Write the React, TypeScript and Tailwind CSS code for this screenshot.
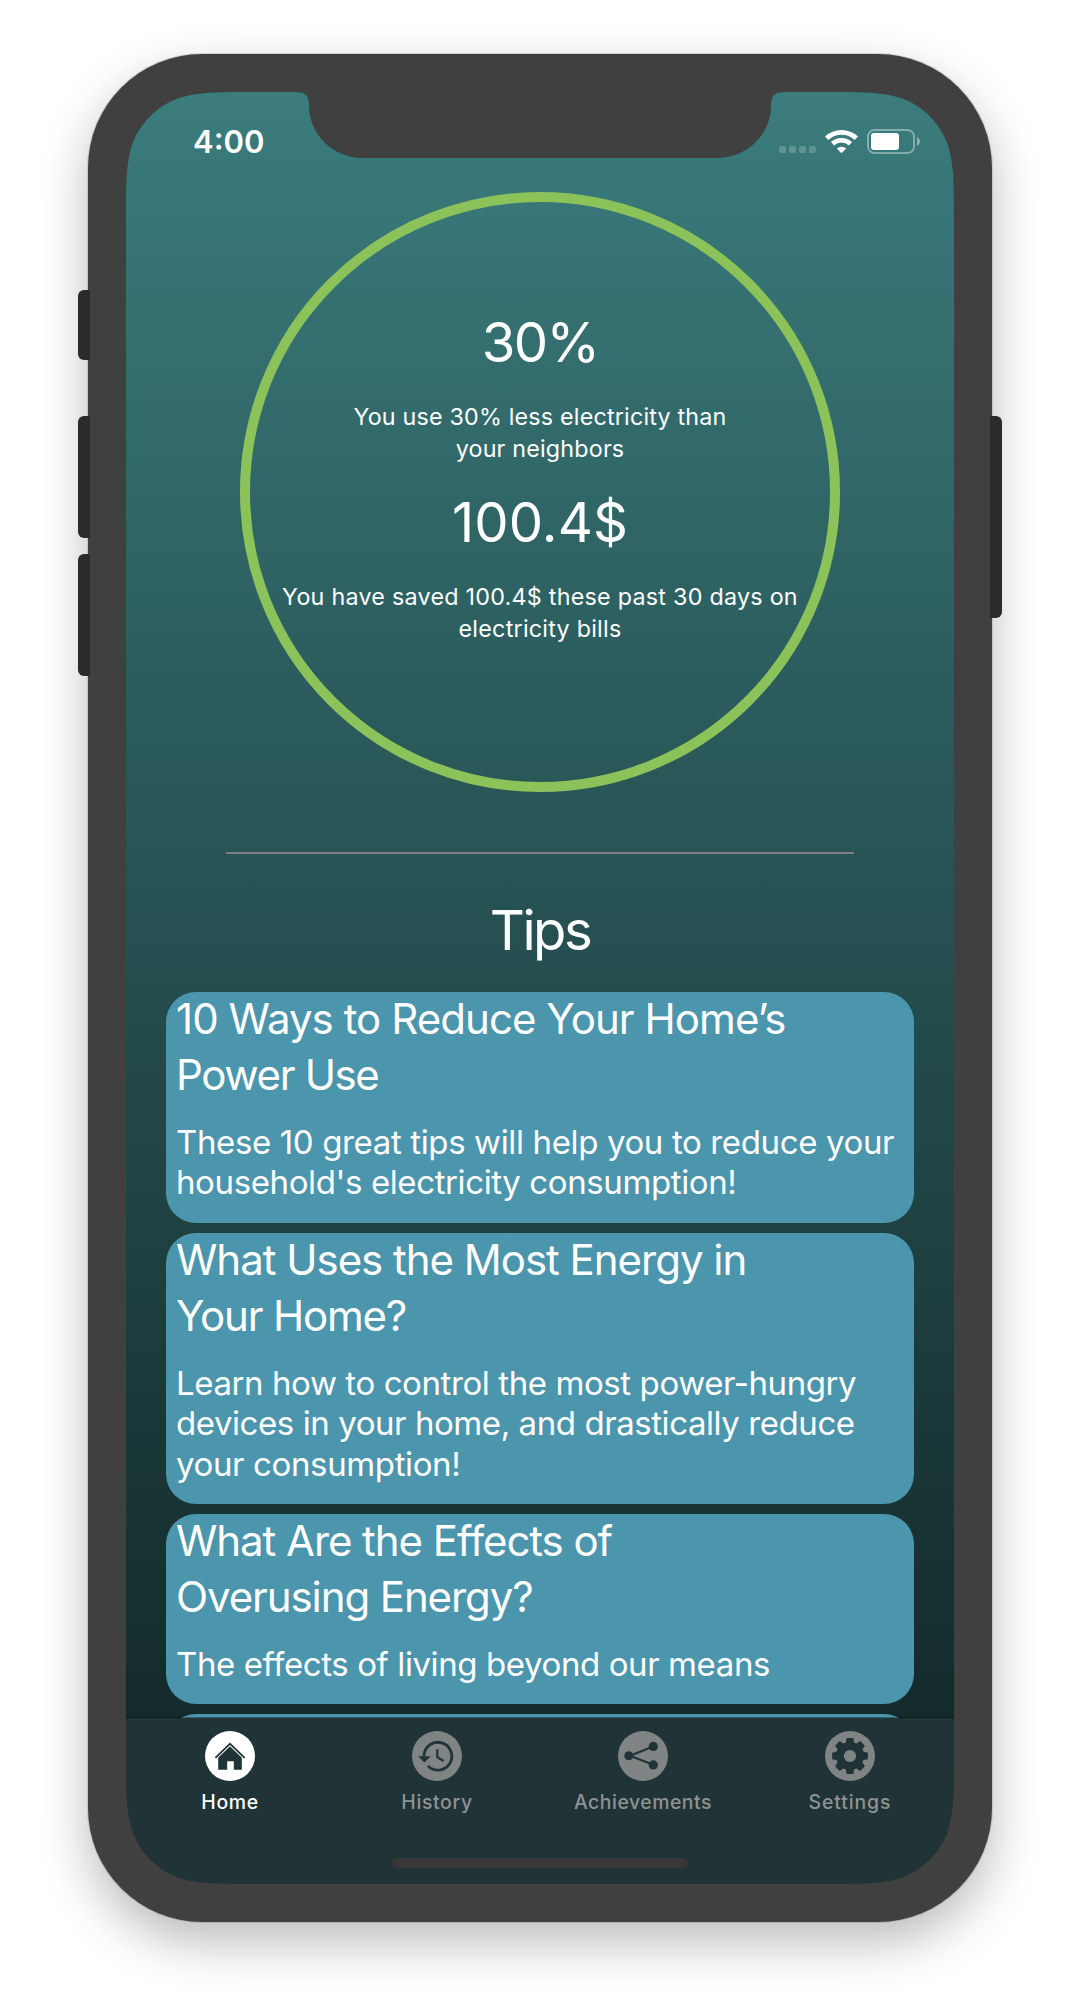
import React from "react";

const SCREEN_CLIP =
  "[clip-path:path('M126.88_0_L171_0_C179_0_183_4_183_13_C183_42_206_66_238_66_L590_66_C622_66_645_42_645_13_C645_4_649_0_657_0_L701.12_0_C737.66_0_755.92_0_775.59_6.22_C797.06_14.03_813.97_30.94_821.78_52.41_C828_72.08_828_90.34_828_126.88_L828_1665.12_C828_1701.66_828_1719.92_821.78_1739.59_C813.97_1761.06_797.06_1777.97_775.59_1785.78_C755.92_1792_737.66_1792_701.12_1792_L126.88_1792_C90.34_1792_72.08_1792_52.41_1785.78_C30.94_1777.97_14.03_1761.06_6.22_1739.59_C0_1719.92_0_1701.66_0_1665.12_L0_126.88_C0_90.34_0_72.08_6.22_52.41_C14.03_30.94_30.94_14.03_52.41_6.22_C72.08_0_90.34_0_126.88_0_Z')]";

type Line = { text: string; tracking: string };

const tips: { title: Line[]; body: Line[] }[] = [
  {
    title: [
      { text: "10 Ways to Reduce Your Home’s", tracking: "tracking-[-0.94px]" },
      { text: "Power Use", tracking: "tracking-[-1.35px]" },
    ],
    body: [
      { text: "These 10 great tips will help you to reduce your", tracking: "tracking-[-0.37px]" },
      { text: "household's electricity consumption!", tracking: "tracking-[-0.39px]" },
    ],
  },
  {
    title: [
      { text: "What Uses the Most Energy in", tracking: "tracking-[-1.02px]" },
      { text: "Your Home?", tracking: "tracking-[-1.2px]" },
    ],
    body: [
      { text: "Learn how to control the most power-hungry", tracking: "tracking-[-0.41px]" },
      { text: "devices in your home, and drastically reduce", tracking: "tracking-[-0.43px]" },
      { text: "your consumption!", tracking: "tracking-[-0.37px]" },
    ],
  },
  {
    title: [
      { text: "What Are the Effects of", tracking: "tracking-[-1.07px]" },
      { text: "Overusing Energy?", tracking: "tracking-[-1.1px]" },
    ],
    body: [{ text: "The effects of living beyond our means", tracking: "tracking-[-0.4px]" }],
  },
];

function Lines({ lines }: { lines: Line[] }) {
  return (
    <>
      {lines.map((l) => (
        <span key={l.text} className={`block whitespace-nowrap ${l.tracking}`}>
          {l.text}
        </span>
      ))}
    </>
  );
}

function TipCard({ title, body }: { title: Line[]; body: Line[] }) {
  return (
    <article className="shrink-0 rounded-[30px] bg-[#4b95ad] px-[10px] pb-[20px]">
      <h3 className="mt-[-1px] text-[42px] leading-[56px]">
        <Lines lines={title} />
      </h3>
      <p className="mt-[18.75px] text-[33px] leading-[40.5px]">
        <Lines lines={body} />
      </p>
    </article>
  );
}

function StatusIcons() {
  return (
    <svg width="142" height="28" viewBox="0 0 142 28" fill="none">
      <g fill="#fff" fillOpacity=".2">
        <rect x="0" y="18" width="7" height="7" rx="2" />
        <rect x="10" y="18" width="7" height="7" rx="2" />
        <rect x="20" y="18" width="7" height="7" rx="2" />
        <rect x="30" y="18" width="7" height="7" rx="2" />
      </g>
      <g stroke="#fff">
        <path d="M47.7 10.2A21.6 21.6 0 0 1 77.3 10.2" strokeWidth="4.8" />
        <path d="M53.5 15.7A13.3 13.3 0 0 1 71.5 15.7" strokeWidth="4.6" />
      </g>
      <path d="M62.5 25.2L57.8 20.6A6.8 6.8 0 0 1 67.2 20.6Z" fill="#fff" />
      <rect x="89" y="2" width="46" height="23" rx="6.5" stroke="#fff" strokeOpacity=".38" strokeWidth="2" />
      <rect x="92" y="5" width="28" height="17" rx="3" fill="#fff" />
      <path d="M138 9.2C142 10.8 142 16.2 138 17.8Z" fill="#fff" fillOpacity=".42" />
    </svg>
  );
}

const GLYPH = "#203336";

function HomeGlyph() {
  return (
    <>
      <path d="M25 15L36.8 26.2V38.8H28.8V30.2H22.2V38.8H13.2V26.2Z" fill={GLYPH} />
      <path d="M10.4 26.9L25 12.8L39.6 26.9" stroke={GLYPH} strokeWidth="2" />
      <path d="M12 27.2L25 14.8L38 27.2" stroke="#fff" strokeWidth="0.9" />
    </>
  );
}

function HistoryGlyph() {
  return (
    <>
      <path d="M12 26V24.8A13.9 13.9 0 1 1 15.9 34.9" stroke={GLYPH} strokeWidth="2.8" />
      <path d="M6 25.2H18.8L12.4 31.6Z" fill={GLYPH} />
      <path d="M25.3 18.2V26.2L31.6 30" stroke={GLYPH} strokeWidth="2.2" />
    </>
  );
}

function ShareGlyph() {
  return (
    <>
      <path d="M35.3 15.6L12 24.8L35.3 33.8" stroke={GLYPH} strokeWidth="2.2" />
      <circle cx="10.8" cy="24.7" r="4.5" fill={GLYPH} />
      <circle cx="35.3" cy="15.4" r="4.6" fill={GLYPH} />
      <circle cx="35.3" cy="33.9" r="4.6" fill={GLYPH} />
    </>
  );
}

function GearGlyph({ hub }: { hub: string }) {
  return (
    <>
      <circle cx="25" cy="25" r="14" fill={GLYPH} />
      {[0, 45, 90, 135, 180, 225, 270, 315].map((a) => (
        <path
          key={a}
          d="M19.8 13.5C20.9 12.6 21.1 11 21.2 9Q21.3 7.1 22.4 7.1H27.6Q28.7 7.1 28.8 9C28.9 11 29.1 12.6 30.2 13.5V16H19.8Z"
          fill={GLYPH}
          transform={`rotate(${a} 25 25)`}
        />
      ))}
      <circle cx="25" cy="25" r="6.1" fill={hub} />
    </>
  );
}

function Tab({
  label,
  tracking,
  active,
  children,
}: {
  label: string;
  tracking: string;
  active?: boolean;
  children: React.ReactNode;
}) {
  return (
    <div className="flex flex-col items-center gap-[9px]">
      <svg width="50" height="50" viewBox="0 0 50 50" fill="none">
        <circle cx="25" cy="25" r="25" fill={active ? "#fff" : "#808485"} />
        {children}
      </svg>
      <span
        className={`text-[19.4px] leading-[24px] font-[460] ${tracking} ${active ? "text-white" : "text-[#8f9293]"}`}
      >
        {label}
      </span>
    </div>
  );
}

function SideButton({ className }: { className: string }) {
  return <div className={`absolute w-[12px] bg-[#2b2b2b] ${className}`} />;
}

export default function App() {
  return (
    <div className="h-[2008px] w-[1080px] overflow-hidden bg-white px-[88px] pt-[54px] font-['Inter',sans-serif] text-white">
      <div className="relative h-[1868px] w-[904px] rounded-[114px] bg-[#404040] px-[38px] pt-[38px] shadow-[0_0_0_1px_rgba(0,0,0,0.12),0_20px_50px_rgba(0,0,0,0.27)]">
        <SideButton className="top-[236px] left-[-10px] h-[70px] rounded-l-[6px]" />
        <SideButton className="top-[362px] left-[-10px] h-[122px] rounded-l-[6px]" />
        <SideButton className="top-[500px] left-[-10px] h-[122px] rounded-l-[6px]" />
        <SideButton className="top-[362px] right-[-10px] h-[202px] rounded-r-[6px]" />

        <div
          className={`flex h-[1792px] w-[828px] flex-col bg-[#203336] ${SCREEN_CLIP}`}
        >
          <div className="flex h-[1626px] flex-col overflow-hidden bg-linear-to-b from-[#3b7c7d] to-[#132a2b]">
            <header className="flex h-[100px] shrink-0 items-start justify-between pr-[33px] pl-[67px]">
              <span className="mt-[31px] text-[31px] leading-[38px] font-semibold">4:00</span>
              <div className="mt-[36px]">
                <StatusIcons />
              </div>
            </header>

            <section className="flex size-[600px] shrink-0 flex-col items-center gap-[25px] self-center rounded-full border-[10px] border-[#8bc25a] pt-[107px] text-center whitespace-nowrap">
              <div className="text-[54.5px] leading-[66px] tracking-[-1.7px]">30%</div>
              <p className="mb-[-1px] pt-px text-[23.3px] leading-[32px] tracking-[0.19px]">
                You use 30% less electricity than
                <br />
                your neighbors
              </p>
              <div className="text-[54.5px] leading-[66px] tracking-[0.1px]">100.4$</div>
              <p className="mb-[-1px] pt-px text-[23.3px] leading-[32px] tracking-[0.25px]">
                You have saved 100.4$ these past 30 days on
                <br />
                electricity bills
              </p>
            </section>

            <div className="mt-[60px] h-[2px] w-[628px] shrink-0 self-center bg-[#808080]" />

            <h2 className="mt-[43px] text-center text-[54.5px] leading-[66px] tracking-[-2.5px]">Tips</h2>

            <div className="mt-[29px] flex flex-col gap-[10px] px-[40px]">
              {tips.map((t) => (
                <TipCard key={t.title[0].text} title={t.title} body={t.body} />
              ))}
              <div className="h-[190px] shrink-0 rounded-[30px] bg-[#4b95ad]" />
            </div>
          </div>

          <nav className="flex flex-1 flex-col items-center justify-between pt-[13px] pb-[16px] shadow-[0_-1px_0_rgba(0,0,0,0.35)]">
            <div className="grid w-full grid-cols-[208px_206px_206px_208px]">
              <Tab label="Home" tracking="tracking-[0.65px]" active>
                <HomeGlyph />
              </Tab>
              <Tab label="History" tracking="tracking-[0.65px]">
                <HistoryGlyph />
              </Tab>
              <Tab label="Achievements" tracking="tracking-[0.53px]">
                <ShareGlyph />
              </Tab>
              <Tab label="Settings" tracking="tracking-[0.9px]">
                <GearGlyph hub="#808485" />
              </Tab>
            </div>
            <div className="h-[10px] w-[296px] rounded-full bg-[#393737]" />
          </nav>
        </div>
      </div>
    </div>
  );
}
